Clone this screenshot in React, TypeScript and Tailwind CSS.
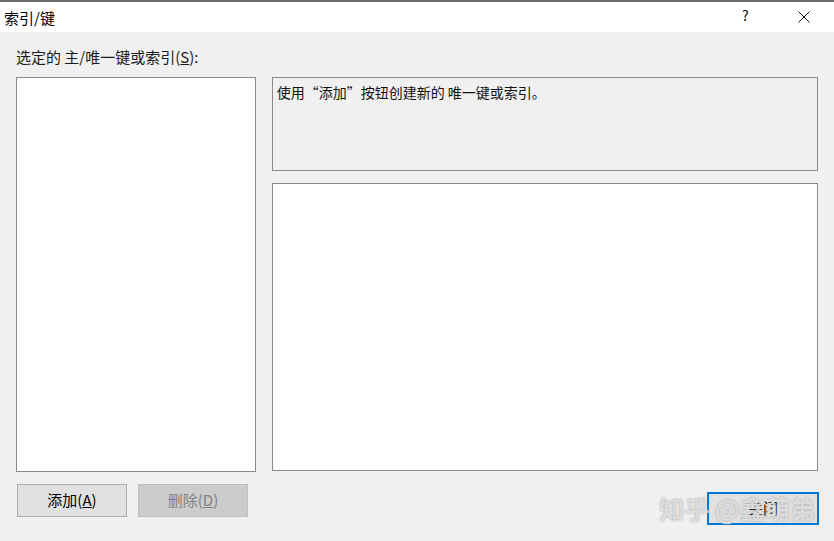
import React from "react";

export default function App() {
  const font = { fontFamily: '"Noto Sans CJK SC", "Noto Sans", sans-serif' };
  return (
    <div className="w-[834px] h-[541px] flex flex-col bg-[#f0f0f0] text-[14px] text-black overflow-hidden" style={font}>
      <div className="h-[32px] bg-white border-t-2 border-[#6e6e6e] flex items-center pl-[4px] relative">
        <span className="leading-none text-[15px]">索引/键</span>
        <span className="absolute left-[742px] top-[6px] text-[14px] leading-none">?</span>
        <svg className="absolute left-[798px] top-[9px]" width="12" height="12" viewBox="0 0 12 12">
          <path d="M0.5 0.5 L11.5 11.5 M11.5 0.5 L0.5 11.5" stroke="#111" strokeWidth="1" />
        </svg>
      </div>
      <div className="flex-1 flex flex-col px-[16px] pt-[17px]">
        <div className="leading-none h-[22px] text-[15px] text-[#1a1a1a]">
          选定的 主/唯一键或索引(<span className="underline">S</span>):
        </div>
        <div className="flex gap-[16px] mt-[6px]">
          <div className="w-[240px] h-[395px] bg-white border border-[#8a8a8a]" />
          <div className="w-[547px] flex flex-col gap-[12px]">
            <div className="h-[94px] border border-[#8a8a8a] bg-[#f0f0f0] px-[4px] pt-[4px] leading-[20px] text-[#111]">
              使用“添加”按钮创建新的 唯一键或索引。
            </div>
            <div className="h-[288px] bg-white border border-[#8a8a8a]" />
          </div>
        </div>
        <div className="flex items-start mt-[12px] text-[15px]">
          <div className="w-[110px] h-[33px] ml-[1px] bg-[#e1e1e1] border border-[#adadad] flex items-center justify-center">
            添加(<span className="underline">A</span>)
          </div>
          <div className="w-[110px] h-[33px] ml-[11px] bg-[#cccccc] border border-[#bfbfbf] text-[#838383] flex items-center justify-center">
            删除(<span className="underline">D</span>)
          </div>
          <div className="ml-auto mr-[-1px] mt-[8px] relative">
            <div className="w-[112px] h-[33px] bg-[#e1e1e1] border-2 border-[#0078d7] flex items-center justify-center">
              关闭
            </div>
            <div className="absolute right-[4px] top-[1px] whitespace-nowrap text-[25px] leading-[30px] text-[#ececec]/80 font-bold [text-shadow:0_0_2px_#999]">
              知乎 @鑫萌弟
            </div>
          </div>
        </div>
      </div>
    </div>
  );
}
